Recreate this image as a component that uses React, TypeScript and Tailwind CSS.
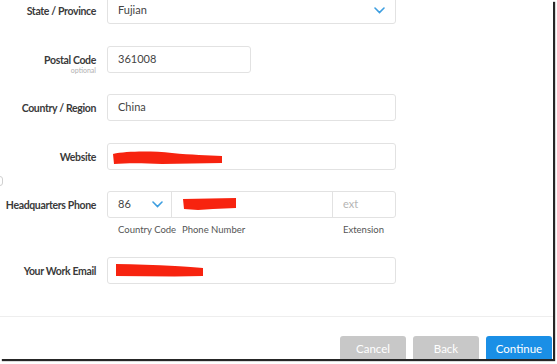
import React from 'react'

const font = { fontFamily: 'Lato, "Open Sans", sans-serif' }

function Chevron() {
    return (
        <svg width="11" height="7" viewBox="0 0 11 7" fill="none">
            <path d="M1 1l4.5 4.5L10 1" stroke="#3d9ee0" strokeWidth="1.6" strokeLinecap="round" />
        </svg>
    )
}

function Label({ children, sub }: { children: React.ReactNode; sub?: string }) {
    return (
        <div className="relative w-[96px] shrink-0 text-right whitespace-nowrap">
            <div className="text-[10.5px] font-bold leading-[14px] tracking-[-0.35px] text-[#3a3a3a]">{children}</div>
            {sub && <div className="absolute right-0 top-[13px] text-[7px] leading-[8px] text-[#b0b0b0]">{sub}</div>}
        </div>
    )
}

function Field({ w = 'w-[289px]', children }: { w?: string; children?: React.ReactNode }) {
    return (
        <div className={`relative ${w} h-[27px] rounded-[3px] border border-[#e2e2e2] flex items-center pl-[10px] pr-[10px] text-[11px] text-[#444]`}>
            {children}
        </div>
    )
}

function Row({ label, sub, className = '', children }: { label: string; sub?: string; className?: string; children: React.ReactNode }) {
    return (
        <div className={`flex gap-[11px] items-center h-[27px] ${className}`}>
            <Label sub={sub}>{label}</Label>
            {children}
        </div>
    )
}

export default function App() {
    return (
        <div className="w-[557px] h-[364px] bg-white overflow-hidden" style={font}>
            <div className="relative w-[553px] h-[359px] overflow-hidden bg-white shadow-[2px_2px_1px_rgba(0,0,0,0.85)]">
                <div className="-mt-[3px]">
                    <Row label="State / Province">
                        <Field>
                            <span className="flex-1">Fujian</span>
                            <Chevron />
                        </Field>
                    </Row>

                    <Row label="Postal Code" sub="optional" className="mt-[22px]">
                        <Field w="w-[144px]">361008</Field>
                    </Row>

                    <Row label="Country / Region" className="mt-[21px]">
                        <Field>China</Field>
                    </Row>

                    <Row label="Website" className="mt-[22px]">
                        <Field>
                            <svg className="absolute left-[4px] top-[6px]" width="112" height="15" viewBox="0 0 112 15">
                                <path d="M1 4 C15 1 40 1 60 3 C80 5 95 5 110 6 L110 13 C90 13 70 14 50 14 C30 13 15 13 2 14 Z" fill="#f7230f" />
                            </svg>
                        </Field>
                    </Row>

                    <Row label="Headquarters Phone" className="mt-[21px]">
                        <div className="flex w-[289px] h-[27px] rounded-[3px] border border-[#e2e2e2] text-[11px] text-[#444]">
                            <div className="w-[64px] flex items-center justify-between pl-[10px] pr-[8px] border-r border-[#e2e2e2]">
                                <span>86</span>
                                <Chevron />
                            </div>
                            <div className="relative w-[161px] border-r border-[#e2e2e2]">
                                <svg className="absolute left-[11px] top-[5px]" width="56" height="14" viewBox="0 0 56 14">
                                    <path d="M0 2 L53 1 L53 11 L30 12 L15 13 L1 12 Z" fill="#f7230f" />
                                </svg>
                            </div>
                            <div className="flex-1 flex items-center pl-[10px] text-[#b5b5b5]">ext</div>
                        </div>
                    </Row>

                    <div className="flex mt-[6px] text-[9.5px] leading-[12px] text-[#555]">
                        <div className="w-[118px] shrink-0" />
                        <div className="w-[64px]">Country Code</div>
                        <div className="w-[161px]">Phone Number</div>
                        <div>Extension</div>
                    </div>

                    <Row label="Your Work Email" className="mt-[21px]">
                        <Field>
                            <svg className="absolute left-[7px] top-[5px]" width="90" height="15" viewBox="0 0 90 15">
                                <path d="M1 1 C20 1 40 2 60 3 C72 4 80 4 88 5 L88 13 C60 14 30 13 1 13 Z" fill="#f7230f" />
                            </svg>
                        </Field>
                    </Row>

                    <div className="mt-[32px] h-px bg-[#eeeeee]" />

                    <div className="flex justify-end gap-[7px] mt-[19px] pr-[1px]">
                        <button className="w-[66px] h-[26px] rounded-t-[3px] bg-[#c8c8c8] text-[11.5px] text-white">Cancel</button>
                        <button className="w-[66px] h-[26px] rounded-t-[3px] bg-[#c8c8c8] text-[11.5px] text-white">Back</button>
                        <button className="w-[66px] h-[26px] rounded-t-[3px] bg-[#1a8fe6] text-[11.5px] text-white">Continue</button>
                    </div>
                </div>

                <div className="absolute -left-[4px] top-[176px] w-[7px] h-[10px] rounded-[3px] border border-[#d0d0d0]" />
            </div>
        </div>
    )
}
